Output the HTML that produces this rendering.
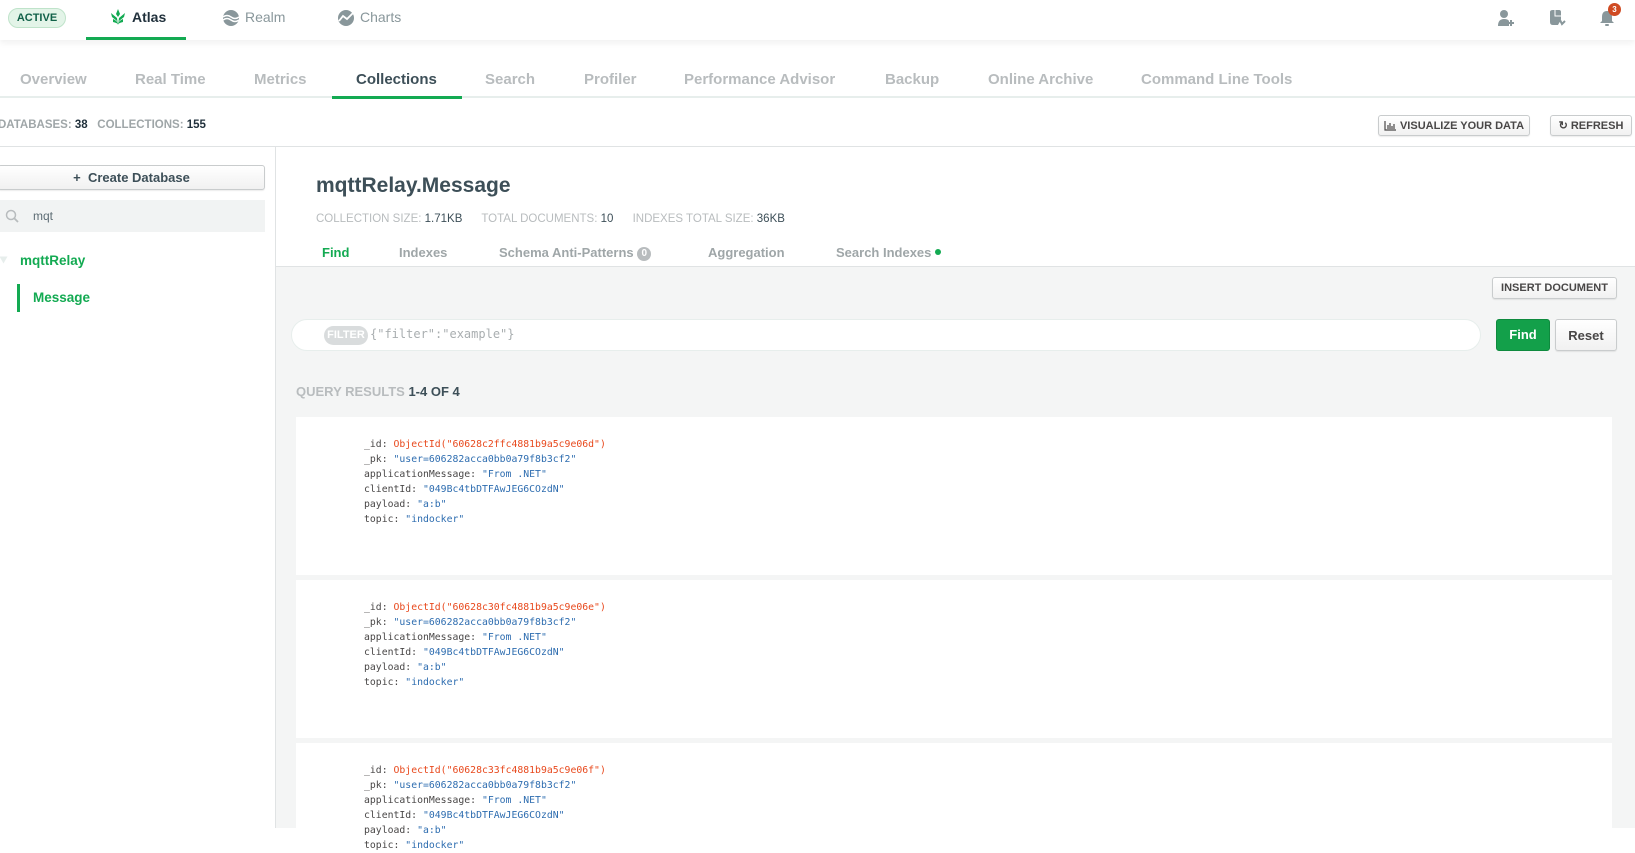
<!DOCTYPE html>
<html><head><meta charset="utf-8"><style>
*{box-sizing:border-box;margin:0;padding:0}
body{width:1635px;height:828px;overflow:hidden;background:#fff;font-family:"Liberation Sans",sans-serif;color:#3d4f58;position:relative}
.a{position:absolute;white-space:nowrap}
.top{position:absolute;left:0;top:0;width:1635px;height:40px;background:#fff;box-shadow:0 3px 6px rgba(0,0,0,.06)}
.tab{font-size:15px;font-weight:bold;color:#b8bcbe}
.btn{position:absolute;border:1px solid #c9cccd;border-radius:3px;background:linear-gradient(#fff,#f1f1f1);font-size:11px;font-weight:bold;color:#494747;display:flex;align-items:center;justify-content:center;box-shadow:0 1px 1px rgba(0,0,0,.08)}
.itab{font-size:13px;font-weight:bold;color:#9fa6a8}
.card{position:absolute;left:296px;width:1316px;background:#fff}
.doc{position:absolute;left:68px;top:20px;font-family:"DejaVu Sans Mono","Liberation Mono",monospace;font-size:9.8px;line-height:15px;color:#494747}
.s{color:#2e6db0}.o{color:#e8491d}
</style></head><body>
<div class="top"></div>
<div class="a" style="left:8px;top:8px;width:58px;height:20px;border-radius:10px;background:#e3f4e8;border:1px solid #bfe3ca;font-size:11px;font-weight:bold;color:#116149;text-align:center;line-height:18px">ACTIVE</div>
<svg class="a" style="left:109px;top:8px" width="18" height="18" viewBox="0 0 18 18"><path d="M9 1 L7 6 L9 9 L11 6Z M2 5 L8 10 L9 17 L10 10 L16 5 L15 9 L10 13 L9 17 L8 13 L3 9Z" fill="#13aa52"/><path d="M4 11 Q9 13 9 17 Q9 13 14 11 L14 14 Q9 15 9 17 Q9 15 4 14Z" fill="#13aa52"/></svg>
<div class="a" style="left:132px;top:9px;font-size:14px;font-weight:bold;color:#21313c">Atlas</div>
<div class="a" style="left:86px;top:37px;width:100px;height:3px;background:#13aa52"></div>
<svg class="a" style="left:222px;top:9px" width="18" height="18"><circle cx="9" cy="9" r="8" fill="#89979b"/><path d="M1 8 Q5 5 9 8 T17 8 M1 11 Q5 8 9 11 T17 11" stroke="#fff" stroke-width="1.5" fill="none"/></svg>
<div class="a" style="left:245px;top:9px;font-size:14px;color:#89979b">Realm</div>
<svg class="a" style="left:337px;top:9px" width="18" height="18"><circle cx="9" cy="9" r="8" fill="#89979b"/><path d="M2 12 L6 7 L10 10 L16 4" stroke="#fff" stroke-width="1.8" fill="none"/></svg>
<div class="a" style="left:360px;top:9px;font-size:14px;color:#89979b">Charts</div>
<svg class="a" style="left:1497px;top:9px" width="18" height="18"><circle cx="7" cy="5" r="4" fill="#89979b"/><path d="M1 17 Q1 10 7 10 Q11 10 12 12 L12 17Z" fill="#89979b"/><path d="M14 11 V17 M11 14 H17" stroke="#89979b" stroke-width="2"/></svg>
<svg class="a" style="left:1548px;top:9px" width="20" height="18"><path d="M2 3 Q2 1 5 1 L11 1 Q13 1 13 3 L13 10 L10 16 L5 16 Q2 16 2 13Z" fill="#89979b"/><path d="M9 15 L12 11 L14 15 L17 12" stroke="#89979b" stroke-width="2" fill="none"/><path d="M7 1 V7 H13" stroke="#fff" stroke-width="1" fill="none"/></svg>
<svg class="a" style="left:1599px;top:9px" width="16" height="18"><path d="M8 2 Q13 2 13 8 L13 12 L15 14 H1 L3 12 L3 8 Q3 2 8 2Z" fill="#89979b"/><rect x="6" y="15" width="4" height="2" rx="1" fill="#89979b"/></svg>
<div class="a" style="left:1608px;top:3px;width:13px;height:13px;border-radius:50%;background:#cf4a22;color:#fff;font-size:8px;font-weight:bold;text-align:center;line-height:13px">3</div>

<div class="a tab" style="left:20px;top:71px">Overview</div>
<div class="a tab" style="left:135px;top:71px">Real Time</div>
<div class="a tab" style="left:254px;top:71px">Metrics</div>
<div class="a tab" style="left:356px;top:71px;color:#3d4f58">Collections</div>
<div class="a tab" style="left:485px;top:71px">Search</div>
<div class="a tab" style="left:584px;top:71px">Profiler</div>
<div class="a tab" style="left:684px;top:71px">Performance Advisor</div>
<div class="a tab" style="left:885px;top:71px">Backup</div>
<div class="a tab" style="left:988px;top:71px">Online Archive</div>
<div class="a tab" style="left:1141px;top:71px">Command Line Tools</div>
<div class="a" style="left:0;top:96px;width:1635px;height:2px;background:#e7eeec"></div>
<div class="a" style="left:332px;top:96px;width:130px;height:3px;background:#13aa52"></div>

<div class="a" style="left:-2px;top:119px;font-size:11.5px;font-weight:bold;color:#9fa6a8">DATABASES: <span style="color:#21313c">38</span>&nbsp;&nbsp; COLLECTIONS: <span style="color:#21313c">155</span></div>
<div class="btn" style="left:1378px;top:115px;width:152px;height:21px"><svg width="12" height="10" style="margin-right:4px"><path d="M1 0V9H12M4 8V4M6 8V2M8 8V5M10 8V3" stroke="#494747" stroke-width="1.2" fill="none"/></svg>VISUALIZE YOUR DATA</div>
<div class="btn" style="left:1550px;top:115px;width:82px;height:21px">&#x21BB; REFRESH</div>
<div class="a" style="left:0;top:146px;width:1635px;height:1px;background:#e0e3e4"></div>

<div class="a" style="left:275px;top:146px;width:1px;height:682px;background:#e0e3e4"></div>
<div class="btn" style="left:-2px;top:165px;width:267px;height:25px;font-size:13px;color:#3d4f58">+&nbsp; Create Database</div>
<div class="a" style="left:0;top:200px;width:265px;height:32px;background:#f1f3f3"></div>
<svg class="a" style="left:5px;top:209px" width="14" height="14"><circle cx="6" cy="6" r="4.5" stroke="#b8bcbe" stroke-width="1.5" fill="none"/><path d="M9.5 9.5L13 13" stroke="#b8bcbe" stroke-width="1.8"/></svg>
<div class="a" style="left:33px;top:209px;font-size:12px;color:#5d6c74">mqt</div>
<div class="a" style="left:0;top:256px;width:0;height:0;border-left:7px solid #e7eeec;border-top:4px solid transparent;border-bottom:4px solid transparent;transform:rotate(90deg)"></div>
<div class="a" style="left:20px;top:253px;font-size:13.5px;font-weight:bold;color:#13aa52">mqttRelay</div>
<div class="a" style="left:17px;top:284px;width:3px;height:28px;background:#13aa52"></div>
<div class="a" style="left:33px;top:290px;font-size:13.5px;font-weight:bold;color:#13aa52">Message</div>

<div class="a" style="left:316px;top:174px;font-size:21px;font-weight:bold;color:#3d4f58">mqttRelay.Message</div>
<div class="a" style="left:316px;top:213px;font-size:11.5px;color:#b8bcbe">COLLECTION SIZE: <span style="color:#3d4f58">1.71KB</span>&nbsp;&nbsp;&nbsp;&nbsp;&nbsp; TOTAL DOCUMENTS: <span style="color:#3d4f58">10</span>&nbsp;&nbsp;&nbsp;&nbsp;&nbsp; INDEXES TOTAL SIZE: <span style="color:#3d4f58">36KB</span></div>
<div class="a itab" style="left:322px;top:245px;color:#13aa52">Find</div>
<div class="a itab" style="left:399px;top:245px">Indexes</div>
<div class="a itab" style="left:499px;top:245px">Schema Anti-Patterns <span style="display:inline-block;width:14px;height:14px;border-radius:7px;background:#b8bcbe;color:#fff;font-size:10px;text-align:center;line-height:14px;vertical-align:1px">0</span></div>
<div class="a itab" style="left:708px;top:245px">Aggregation</div>
<div class="a itab" style="left:836px;top:245px">Search Indexes <span style="display:inline-block;width:6px;height:6px;border-radius:3px;background:#13aa52;vertical-align:2px"></span></div>

<div class="a" style="left:276px;top:266px;width:1359px;height:562px;background:#f4f5f5;border-top:1px solid #e0e3e4"></div>
<div class="btn" style="left:1492px;top:277px;width:125px;height:22px;font-size:11px">INSERT DOCUMENT</div>
<div class="a" style="left:291px;top:319px;width:1190px;height:32px;background:#fff;border:1px solid #e7eeec;border-radius:16px"></div>
<div class="a" style="left:324px;top:326px;width:44px;height:19px;border-radius:10px;background:#d9dcdd;color:#fff;font-size:11px;font-weight:bold;text-align:center;line-height:19px">FILTER</div>
<div class="a" style="left:370px;top:327px;font-family:'DejaVu Sans Mono',monospace;font-size:12px;color:#a9aeb0">{"filter":"example"}</div>
<div class="a" style="left:1496px;top:319px;width:54px;height:32px;border-radius:3px;background:#13a04a;border:1px solid #0e8a3e;color:#fff;font-size:13px;font-weight:bold;text-align:center;line-height:30px">Find</div>
<div class="btn" style="left:1555px;top:319px;width:62px;height:32px;font-size:13px">Reset</div>
<div class="a" style="left:296px;top:384px;font-size:13px;font-weight:bold;color:#b8bcbe">QUERY RESULTS <span style="color:#3d4f58">1-4 OF 4</span></div>

<div class="card" style="top:417px;height:158px"><div class="doc">_id: <span class="o">ObjectId("60628c2ffc4881b9a5c9e06d")</span><br>_pk: <span class="s">"user=606282acca0bb0a79f8b3cf2"</span><br>applicationMessage: <span class="s">"From .NET"</span><br>clientId: <span class="s">"049Bc4tbDTFAwJEG6COzdN"</span><br>payload: <span class="s">"a:b"</span><br>topic: <span class="s">"indocker"</span></div></div>
<div class="card" style="top:580px;height:158px"><div class="doc">_id: <span class="o">ObjectId("60628c30fc4881b9a5c9e06e")</span><br>_pk: <span class="s">"user=606282acca0bb0a79f8b3cf2"</span><br>applicationMessage: <span class="s">"From .NET"</span><br>clientId: <span class="s">"049Bc4tbDTFAwJEG6COzdN"</span><br>payload: <span class="s">"a:b"</span><br>topic: <span class="s">"indocker"</span></div></div>
<div class="card" style="top:743px;height:100px"><div class="doc">_id: <span class="o">ObjectId("60628c33fc4881b9a5c9e06f")</span><br>_pk: <span class="s">"user=606282acca0bb0a79f8b3cf2"</span><br>applicationMessage: <span class="s">"From .NET"</span><br>clientId: <span class="s">"049Bc4tbDTFAwJEG6COzdN"</span><br>payload: <span class="s">"a:b"</span><br>topic: <span class="s">"indocker"</span></div></div>
</body></html>
